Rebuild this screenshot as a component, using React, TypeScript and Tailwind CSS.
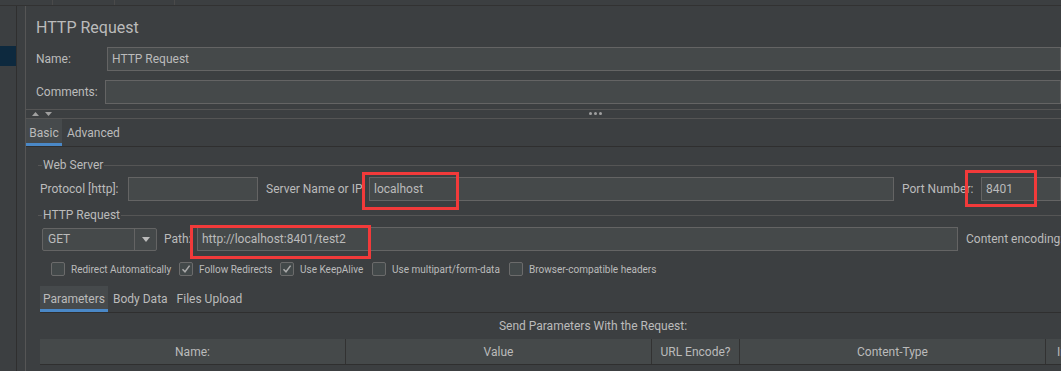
import React from 'react';

const font = { fontFamily: 'Roboto, "Noto Sans", "Liberation Sans", sans-serif' };

function Input({ value = '', className = '' }: { value?: string; className?: string }) {
  return (
    <div className={`h-[24px] bg-[#45494a] border border-[#646464] flex items-center px-[4px] text-[12px] text-[#bbbbbb] whitespace-nowrap ${className}`}>
      {value}
    </div>
  );
}

function RedBox({ className }: { className: string }) {
  return <div className={`absolute border-[3px] border-[#f23a3a] pointer-events-none ${className}`} />;
}

function Check({ label, checked = false, gap }: { label: string; checked?: boolean; gap: string }) {
  return (
    <div className={`flex items-center shrink-0 ${gap}`}>
      <div className="w-[14px] h-[14px] shrink-0 rounded-[2px] border border-[#6b6b6b] bg-[#43494a] flex items-center justify-center mr-[6px]">
        {checked && (
          <svg width="10" height="10" viewBox="0 0 10 10">
            <path d="M1.5 5.2 L4 7.8 L8.6 1.6" fill="none" stroke="#a9a9a9" strokeWidth="1.5" />
          </svg>
        )}
      </div>
      <span className="text-[10px] text-[#bbbbbb] whitespace-nowrap">{label}</span>
    </div>
  );
}

function Titled({ title }: { title: string }) {
  return (
    <div className="flex items-center h-[20px] pl-[12px]">
      <div className="w-[4px] h-px bg-[#555555]" />
      <span className="px-[1px] text-[12px] text-[#bbbbbb]">{title}</span>
      <div className="flex-1 h-px bg-[#555555]" />
    </div>
  );
}

export default function App() {
  return (
    <div className="w-[1061px] h-[371px] overflow-hidden bg-[#3c3f41] text-[#bbbbbb] select-none" style={font}>
      {/* top tab strip */}
      <div className="h-[6px] border-b border-[#323232] flex">
        <div className="w-[53px] border-r border-[#4a4a4a]" />
        <div className="w-[62px] border-r border-[#4a4a4a]" />
        <div className="w-[60px] border-r border-[#4a4a4a]" />
      </div>

      <div className="flex h-[365px]">
        {/* left tree */}
        <div className="w-[17px] border-r border-[#2f2f2f] flex flex-col">
          <div className="h-[40px]" />
          <div className="h-[20px] bg-[#0d293e]" />
        </div>
        <div className="w-[8px]" />

        {/* main */}
        <div className="flex-1 border-l border-[#555555] flex flex-col min-w-0">
          <div className="h-[41px] flex items-center pl-[10px] pt-[3px] text-[16px] text-[#bbbbbb]">HTTP Request</div>

          <div className="flex items-center h-[24px]">
            <span className="w-[81px] pl-[10px] text-[12px]">Name:</span>
            <Input value="HTTP Request" className="flex-1 pl-[4px]" />
          </div>
          <div className="h-[9px]" />
          <div className="flex items-center h-[24px]">
            <span className="w-[79px] pl-[10px] text-[12px]">Comments:</span>
            <Input className="flex-1" />
          </div>
          <div className="h-[5px]" />

          {/* splitter */}
          <div className="h-[10px] border-t border-b border-[#555555] relative flex items-center">
            <svg width="24" height="8" viewBox="0 0 24 8" className="ml-[5px]">
              <path d="M1 6 L4.5 2 L8 6 Z" fill="#a0a0a0" />
              <path d="M14 2 L21 2 L17.5 6 Z" fill="#a0a0a0" />
            </svg>
            <div className="absolute left-[563px] top-[2px] flex gap-[2px]">
              <div className="w-[3px] h-[3px] rounded-full bg-[#a0a0a0]" />
              <div className="w-[3px] h-[3px] rounded-full bg-[#a0a0a0]" />
              <div className="w-[3px] h-[3px] rounded-full bg-[#a0a0a0]" />
            </div>
          </div>

          {/* tabs */}
          <div className="h-[28px] flex border-b border-[#2f2f2f] text-[12px]">
            <div className="w-[36px] bg-[#464a4c] border-b-[3px] border-[#4a88c7] flex items-center justify-center pt-[3px]">Basic</div>
            <div className="px-[5px] flex items-center">Advanced</div>
          </div>

          <div className="h-[8px]" />
          <Titled title="Web Server" />
          <div className="h-[2px]" />

          <div className="flex items-center h-[24px]">
            <span className="w-[102px] pl-[14px] text-[12px] whitespace-nowrap">Protocol [http]:</span>
            <Input className="w-[130px]" />
            <span className="w-[111px] pl-[8px] text-[12px] whitespace-nowrap">Server Name or IP:</span>
            <div className="relative w-[525px]">
              <Input value="localhost" />
              <RedBox className="left-[-7px] top-[-5px] w-[97px] h-[38px]" />
            </div>
            <span className="w-[87px] pl-[8px] text-[12px] whitespace-nowrap">Port Number:</span>
            <div className="relative flex-1">
              <Input value="8401" className="pl-[4px]" />
              <RedBox className="left-[-16px] top-[-7px] w-[72px] h-[37px]" />
            </div>
          </div>

          <div className="h-[4px]" />
          <Titled title="HTTP Request" />
          <div className="h-[2px]" />

          <div className="flex items-center h-[24px]">
            <div className="ml-[16px] w-[115px] h-[23px] shrink-0 bg-[#45494a] border border-[#646464] rounded-[2px] flex text-[12px]">
              <div className="flex-1 flex items-center pl-[5px] border-r border-[#646464]">GET</div>
              <div className="w-[21px] flex items-center justify-center">
                <svg width="8" height="5" viewBox="0 0 8 5">
                  <path d="M0 0 L8 0 L4 5 Z" fill="#bbbbbb" />
                </svg>
              </div>
            </div>
            <span className="w-[40px] shrink-0 pl-[7px] text-[12px]">Path:</span>
            <div className="relative w-[761px] shrink-0">
              <Input value="http://localhost:8401/test2" />
              <RedBox className="left-[-7px] top-[-2px] w-[181px] h-[34px]" />
            </div>
            <span className="pl-[8px] text-[12px] whitespace-nowrap">Content encoding:</span>
          </div>

          {/* checkboxes */}
          <div className="h-[11px]" />
          <div className="flex items-center h-[14px] pl-[25px]">
            <Check label="Redirect Automatically" gap="w-[128px]" />
            <Check label="Follow Redirects" checked gap="w-[101px]" />
            <Check label="Use KeepAlive" checked gap="w-[92px]" />
            <Check label="Use multipart/form-data" gap="w-[137px]" />
            <Check label="Browser-compatible headers" gap="" />
          </div>

          {/* sub tabs */}
          <div className="h-[10px]" />
          <div className="h-[27px] flex ml-[14px] border-b border-[#2f2f2f] text-[12px]">
            <div className="w-[68px] bg-[#464a4c] border-b-[3px] border-[#4a88c7] flex items-center justify-center pt-[2px]">Parameters</div>
            <div className="px-[5px] flex items-center">Body Data</div>
            <div className="px-[4px] flex items-center">Files Upload</div>
          </div>

          <div className="h-[26px] flex items-center justify-center text-[12px] pl-[99px]">Send Parameters With the Request:</div>

          {/* table header */}
          <div className="ml-[14px] h-[26px] flex bg-[#45494a] border-b border-[#2f2f2f] text-[12px]">
            <div className="w-[306px] border-r border-[#323232] flex items-center justify-center">Name:</div>
            <div className="w-[306px] border-r border-[#323232] flex items-center justify-center">Value</div>
            <div className="w-[88px] border-r border-[#323232] flex items-center justify-center">URL Encode?</div>
            <div className="w-[306px] border-r border-[#323232] flex items-center justify-center">Content-Type</div>
            <div className="flex-1 flex items-center pl-[11px] whitespace-nowrap overflow-hidden">Include Equals?</div>
          </div>
        </div>
      </div>
    </div>
  );
}
